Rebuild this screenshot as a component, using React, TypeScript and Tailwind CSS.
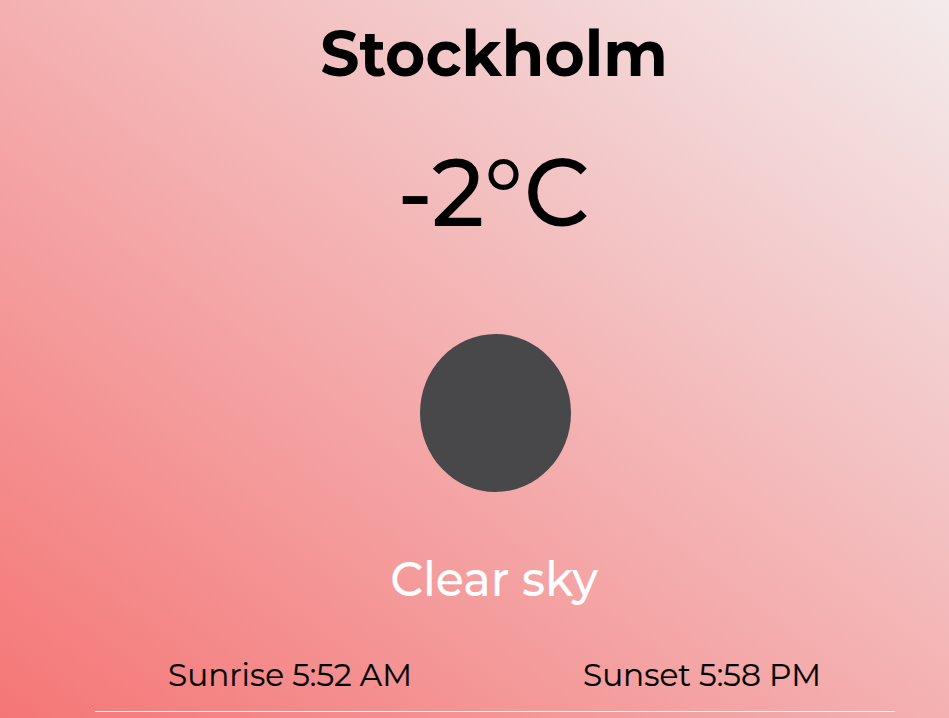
export default function App() {
  return (
    <main className="flex h-[718px] w-full flex-col items-center overflow-hidden bg-[linear-gradient(to_top_right,#f57676_0%,#f3ebec_100%)] font-['Montserrat','Inter',sans-serif] text-black">
      <h1 className="mt-[13px] ml-[39px] h-20 scale-y-[1.045] text-[61.5px] leading-[80px] font-bold whitespace-nowrap">Stockholm</h1>
      <p className="mt-[39px] ml-[38px] h-[120px] scale-y-[1.04] text-[92px] leading-[120px] font-medium whitespace-nowrap">-2°C</p>
      <div className="mt-[82px] ml-[42px] h-[158px] w-[151px] shrink-0 rounded-[50%] bg-[#48484a]" />
      <p className="mt-[57px] ml-[39px] h-[60px] scale-y-[1.04] text-[46px] leading-[60px] font-medium whitespace-nowrap text-white">Clear sky</p>
      <section className="mt-[46px] ml-[41px] flex h-[57px] w-[800px] shrink-0 justify-center gap-[171px] border-b border-white pr-[1px] text-[31.2px] leading-[40px] whitespace-nowrap">
        <span className="h-10 scale-y-[1.04] [-webkit-text-stroke:0.2px_black]">Sunrise 5:52 AM</span>
        <span className="h-10 scale-y-[1.04] [-webkit-text-stroke:0.2px_black]">Sunset 5:58 PM</span>
      </section>
    </main>
  );
}
